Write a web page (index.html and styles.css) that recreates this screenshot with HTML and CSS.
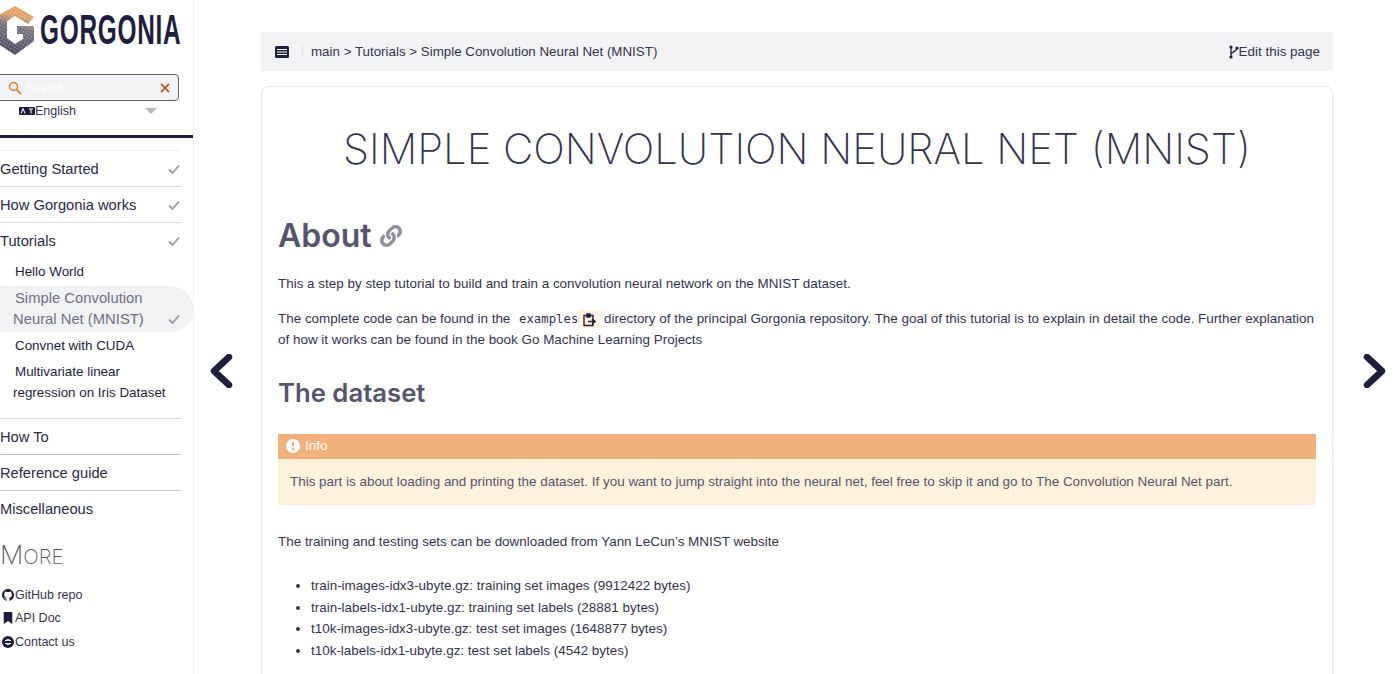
FILE: index.html
```html
<!DOCTYPE html>
<html lang="en">
<head>
<meta charset="utf-8">
<title>Simple Convolution Neural Net (MNIST)</title>
<link rel="stylesheet" href="styles.css">
</head>
<body>
<div class="page">
  <aside class="sidebar">
    <a class="logo">
      <svg class="logo-mark" viewBox="0 0 36 60" width="36" height="60">
        <defs>
          <linearGradient id="lg" x1="0.6" y1="0" x2="0.4" y2="1">
            <stop offset="0" stop-color="#eda75c"/>
            <stop offset="0.22" stop-color="#d99f6c"/>
            <stop offset="0.42" stop-color="#77737f"/>
            <stop offset="1" stop-color="#47465e"/>
          </linearGradient>
          <pattern id="dots" width="3" height="3" patternUnits="userSpaceOnUse" patternTransform="rotate(30)">
            <rect width="1.1" height="1.1" fill="#fff" fill-opacity="0.55"/>
          </pattern>
        </defs>
        <path id="g" d="M-3 16 L15 6 L34 17 L28 24 L15 16 L7 21 L7 38 L15 44 L23 39 L23 34 L17 34 L17 26 L34 26 L34 41 L15 55 L-3 43 Z" fill="url(#lg)"/>
        <path d="M-3 16 L15 6 L34 17 L28 24 L15 16 L7 21 L7 38 L15 44 L23 39 L23 34 L17 34 L17 26 L34 26 L34 41 L15 55 L-3 43 Z" fill="url(#dots)"/>
      </svg>
      <span class="logo-text">GORGONIA</span>
    </a>
    <div class="search">
      <svg class="search-icon" viewBox="0 0 14 14" width="14" height="14"><circle cx="5.5" cy="5.5" r="4" fill="none" stroke="#d9822b" stroke-width="1.5"/><path d="M8.6 8.6 L13 13" stroke="#d9822b" stroke-width="1.8"/></svg>
      <span class="search-ph">Search...</span>
      <svg class="search-x" viewBox="0 0 10 10" width="10" height="10"><path d="M1 1 L9 9 M9 1 L1 9" stroke="#b5652a" stroke-width="1.8"/></svg>
    </div>
    <div class="lang">
      <svg class="lang-icon" viewBox="0 0 16 8" width="16" height="8"><rect width="16" height="8" rx="1" fill="#1e1e3f"/><path d="M2 6.5 L4 1.5 L6 6.5 M10 2 H14 M12 2 V6.5" fill="none" stroke="#fff" stroke-width="1"/></svg>
      <span>English</span>
      <span class="lang-caret"></span>
    </div>
    <div class="rule"></div>
    <ul class="menu">
      <li class="menu-item dotted"><span>Getting Started</span><svg class="check" viewBox="0 0 12 10" width="12" height="10"><path d="M1 5.5 L4.5 9 L11 1.5" fill="none" stroke="#9a9aa6" stroke-width="1.8"/></svg></li>
      <li class="menu-item dotted"><span>How Gorgonia works</span><svg class="check" viewBox="0 0 12 10" width="12" height="10"><path d="M1 5.5 L4.5 9 L11 1.5" fill="none" stroke="#9a9aa6" stroke-width="1.8"/></svg></li>
      <li class="menu-item"><span>Tutorials</span><svg class="check" viewBox="0 0 12 10" width="12" height="10"><path d="M1 5.5 L4.5 9 L11 1.5" fill="none" stroke="#9a9aa6" stroke-width="1.8"/></svg></li>
      <li class="submenu">
        <a class="sub hello">Hello World</a>
        <a class="sub active"><span class="sub-text"><span class="indent">Simple Convolution</span><br>Neural Net (MNIST)</span><svg class="check" viewBox="0 0 12 10" width="12" height="10"><path d="M1 5.5 L4.5 9 L11 1.5" fill="none" stroke="#9a9aa6" stroke-width="1.8"/></svg></a>
        <a class="sub convnet">Convnet with CUDA</a>
        <a class="sub multi"><span class="indent">Multivariate linear</span><br>regression on Iris Dataset</a>
      </li>
      <li class="menu-item solid"><span>How To</span></li>
      <li class="menu-item solid"><span>Reference guide</span></li>
      <li class="menu-item"><span>Miscellaneous</span></li>
    </ul>
    <h3 class="more">More</h3>
    <ul class="links">
      <li><svg viewBox="0 0 16 16" width="12" height="12"><path fill="#1e1e3f" d="M8 0C3.58 0 0 3.58 0 8c0 3.54 2.29 6.53 5.47 7.59.4.07.55-.17.55-.38 0-.19-.01-.82-.01-1.49-2.01.37-2.53-.49-2.69-.94-.09-.23-.48-.94-.82-1.13-.28-.15-.68-.52-.01-.53.63-.01 1.08.58 1.23.82.72 1.21 1.87.87 2.33.66.07-.52.28-.87.51-1.07-1.78-.2-3.64-.89-3.64-3.95 0-.87.31-1.59.82-2.15-.08-.2-.36-1.02.08-2.12 0 0 .67-.21 2.2.82.64-.18 1.32-.27 2-.27.68 0 1.36.09 2 .27 1.53-1.04 2.2-.82 2.2-.82.44 1.1.16 1.92.08 2.12.51.56.82 1.27.82 2.15 0 3.07-1.87 3.75-3.65 3.95.29.25.54.73.54 1.48 0 1.07-.01 1.93-.01 2.2 0 .21.15.46.55.38A8.013 8.013 0 0016 8c0-4.42-3.58-8-8-8z"/></svg>GitHub repo</li>
      <li><svg viewBox="0 0 12 14" width="12" height="12"><path fill="#1e1e3f" d="M1 0 H11 V14 L6 10.5 L1 14 Z"/></svg>API Doc</li>
      <li><svg viewBox="0 0 16 16" width="12" height="12"><circle cx="8" cy="8" r="8" fill="#1e1e3f"/><path d="M4 6 H7 V4 M12 6 H9 V4 M4 10 H7 V12 M12 10 H9 V12" fill="none" stroke="#fff" stroke-width="1.5"/></svg>Contact us</li>
    </ul>
  </aside>

  <div class="nav-col">
    <svg viewBox="0 0 24 34" width="24" height="34"><path d="M20 3 L5 17 L20 31" fill="none" stroke="#1e1e3f" stroke-width="6.5" stroke-linecap="round" stroke-linejoin="round"/></svg>
  </div>

  <main class="main">
    <div class="topbar">
      <svg class="topbar-icon" viewBox="0 0 14 12" width="14" height="12"><rect width="14" height="12" rx="1.5" fill="#1e1e3f"/><path d="M2 3.5 H12 M2 6 H12 M2 8.5 H12" stroke="#fff" stroke-width="1"/></svg>
      <span class="crumb-sep"></span>
      <span class="crumbs">main &gt; Tutorials &gt; Simple Convolution Neural Net (MNIST)</span>
      <span class="edit"><svg viewBox="0 0 10 14" width="10" height="14"><circle cx="2" cy="2" r="1.6" fill="#1e1e3f"/><circle cx="2" cy="12" r="1.6" fill="#1e1e3f"/><circle cx="8" cy="3" r="1.6" fill="#1e1e3f"/><path d="M2 2 V12 M8 3 C8 7 3 6 2 9" fill="none" stroke="#1e1e3f" stroke-width="1.3"/></svg>Edit this page</span>
    </div>
    <article class="card">
      <h1 class="title">Simple Convolution Neural Net (MNIST)</h1>
      <h2 class="h-about">About <svg class="link-icon" viewBox="0 0 512 512" width="22" height="22"><path fill="#8f8f9d" d="M326.6 185.4c59.7 59.8 58.9 155.7.4 214.6l-67.2 67.2c-59.3 59.3-155.7 59.3-215 0-59.3-59.3-59.3-155.7 0-215l37.1-37.1c9.8-9.8 26.8-3.3 27.3 10.6.6 17.7 3.8 35.5 9.7 52.7 2 5.8.6 12.3-3.8 16.6l-13.1 13.1c-28 28-28.9 73.7-1.2 102 28 28.6 74.1 28.7 102.3.5l67.2-67.2c28.2-28.2 28.1-73.8 0-101.8-3.7-3.7-7.4-6.6-10.3-8.6-5.1-3.5-8.2-9.2-8.4-15.3-.4-10.6 3.4-21.5 11.7-29.8l21.1-21.1c5.5-5.5 14.2-6.2 20.6-1.7 7.4 5.2 14.3 11 20.7 17.3zM467.5 44.4c-59.3-59.3-155.7-59.3-215 0l-67.2 67.2c-.1.1-.2.2-.3.3-58.5 58.9-59.3 154.8.4 214.6 6.4 6.4 13.3 12.2 20.7 17.3 6.4 4.5 15.1 3.8 20.6-1.7l21.1-21.1c8.3-8.3 12.1-19.2 11.7-29.8-.2-6.1-3.3-11.8-8.4-15.3-2.9-2-6.6-4.9-10.3-8.6-28.1-28-28.2-73.6 0-101.8l67.2-67.2c28.2-28.2 74.3-28.1 102.3.5 27.7 28.3 26.8 74-1.2 102l-13.1 13.1c-4.4 4.3-5.8 10.8-3.8 16.6 5.9 17.2 9.1 35 9.7 52.7.5 13.9 17.5 20.4 27.3 10.6l37.1-37.1c59.3-59.3 59.3-155.7 0-215z"/></svg></h2>
      <p class="p1">This a step by step tutorial to build and train a convolution neural network on the MNIST dataset.</p>
      <p class="p2">The complete code can be found in the <code class="code">examples</code><span class="clip"><svg viewBox="0 0 14 14" width="14" height="14"><path d="M2 2.5 H11 V12.5 H2 Z M5 1 H8 V4 H5 Z" fill="none" stroke="#1e1e3f" stroke-width="1.4"/><path d="M6 8.5 H13 M10 6 L13 8.5 L10 11" fill="none" stroke="#1e1e3f" stroke-width="1.5"/></svg></span> directory of the principal Gorgonia repository. The goal of this tutorial is to explain in detail the code. Further explanation of how it works can be found in the book Go Machine Learning Projects</p>
      <h2 class="h-data">The dataset</h2>
      <div class="notice">
        <div class="notice-head"><svg viewBox="0 0 14 14" width="14" height="14"><circle cx="7" cy="7" r="7" fill="#fff"/><rect x="6" y="3" width="2" height="5" fill="#f0b27a"/><rect x="6" y="9" width="2" height="2" fill="#f0b27a"/></svg><span>Info</span></div>
        <div class="notice-body">This part is about loading and printing the dataset. If you want to jump straight into the neural net, feel free to skip it and go to The Convolution Neural Net part.</div>
      </div>
      <p class="p3">The training and testing sets can be downloaded from Yann LeCun’s MNIST website</p>
      <ul class="files">
        <li>train-images-idx3-ubyte.gz: training set images (9912422 bytes)</li>
        <li>train-labels-idx1-ubyte.gz: training set labels (28881 bytes)</li>
        <li>t10k-images-idx3-ubyte.gz: test set images (1648877 bytes)</li>
        <li>t10k-labels-idx1-ubyte.gz: test set labels (4542 bytes)</li>
      </ul>
    </article>
  </main>

  <div class="nav-col nav-next">
    <svg viewBox="0 0 24 34" width="24" height="34"><path d="M4 3 L19 17 L4 31" fill="none" stroke="#1e1e3f" stroke-width="6.5" stroke-linecap="round" stroke-linejoin="round"/></svg>
  </div>
</div>
</body>
</html>
```
FILE: styles.css
```css
* { box-sizing: border-box; }
html, body { margin: 0; padding: 0; background: #fff; }
body {
  font-family: "Liberation Sans", Arial, sans-serif;
  font-size: 13.45px;
  color: #33334f;
  width: 1400px;
  height: 674px;
  overflow: hidden;
}
.page { display: flex; height: 674px; overflow: hidden; }
ul { list-style: none; margin: 0; padding: 0; }

.sidebar { width: 194px; flex: none; border-right: 1px solid #f0f0f2; height: 674px; overflow: hidden; }
.logo { display: flex; align-items: flex-start; height: 74px; }
.logo-mark { flex: none; }
.logo-text {
  display: inline-block;
  font: bold 42px/1 "Liberation Sans", sans-serif;
  color: #1e1e3f;
  transform: scaleX(0.58);
  transform-origin: left top;
  margin: 9px 0 0 4px;
  letter-spacing: 1.3px;
  white-space: nowrap;
}
.search {
  display: flex; align-items: center;
  width: 184px; height: 27px; margin-left: -5px;
  background: #f1f2f4; border: 1px solid #62607a; border-radius: 4px;
  padding: 0 8px 0 12px;
}
.search-ph { color: #fff; font-size: 12px; margin-left: 4px; flex: 1; }
.lang { display: flex; align-items: center; height: 20px; padding-left: 19px; font-size: 12.5px; padding-right: 36px; }
.lang-icon { flex: none; }
.lang span:nth-child(2) { flex: 1; }
.lang-caret { width: 0; height: 0; border: 6px solid transparent; border-top: 6px solid #b8b8c2; border-bottom: 0; }
.rule { height: 3px; background: #1e1e3f; margin-top: 14px; }

.menu { margin-top: 12px; border-top: 1px solid #f0f0f2; margin-right: 12px; }
.menu-item { display: flex; justify-content: space-between; align-items: center; height: 36px; font-size: 14.7px; color: #2a2a48; }
.menu-item.dotted { border-bottom: 1px dotted #c4c4cc; }
.menu-item.solid { border-bottom: 1px solid #c4c4cc; }
.check { flex: none; margin-right: 1px; }
.submenu { display: block; padding-bottom: 15px; border-bottom: 1px dotted #c4c4cc; }
.sub { display: block; font-size: 13.4px; line-height: 21px; padding-left: 13px; color: #1e1e3f; }
.indent { padding-left: 2px; }
.hello { padding-left: 15px; margin: 2px 0 4px; }
.active {
  display: flex; align-items: flex-end; justify-content: space-between;
  margin-right: -12px; padding: 2px 12px 2px 13px;
  background: #f1f2f4; border-radius: 0 22px 22px 0;
  color: #6f6f82; font-size: 14.8px; height: 46px;
}
.active .check { margin-bottom: 6px; }
.convnet { padding-left: 15px; margin-top: 3px; }
.multi { margin-top: 5px; }

.more { margin: 13px 0 0; font: 200 20.5px/30px Inter, sans-serif; text-transform: uppercase; color: #55556e; height: 30px; }
.more::first-letter { font-size: 26px; }
.links { margin-top: 13px; font-size: 12.5px; }
.links li { display: flex; align-items: center; gap: 1px; height: 23.5px; padding-left: 2px; }

.nav-col { width: 67px; flex: none; padding: 354px 0 0 15px; }
.nav-next { width: auto; flex: 1; padding-left: 30px; }

.main { width: 1072px; flex: none; padding-top: 32px; }
.topbar { display: flex; align-items: center; height: 39px; background: #f2f3f5; padding: 0 13px 0 14px; }
.topbar-icon { flex: none; margin-right: 13px; }
.crumb-sep { width: 1px; height: 15px; background: #e4e4e8; margin-right: 8px; flex: none; }
.crumbs { flex: 1; font-size: 13.35px; }
.edit { display: flex; align-items: center; }
.card { margin-top: 15px; border: 1px solid #e8e8ec; border-radius: 8px; padding: 0 16px; height: 700px; }
.title { margin: 34px 0 0; text-align: center; font: 200 41.8px/56px Inter, sans-serif; text-transform: uppercase; color: #33334f; }
.h-about { margin: 37px 0 0; font: 600 32px/44px Inter, sans-serif; color: #55556e; display: flex; align-items: center; gap: 8px; }
.p1 { margin: 15px 0 0; line-height: 21px; }
.p2 { margin: 14px 0 0; line-height: 21px; }
.code { font: 12.3px "DejaVu Sans Mono", monospace; margin-left: 5px; }
.clip { display: inline-block; background: #fff2dc; padding: 2px 4px 0; height: 18px; width: 22px; vertical-align: -4px; }
.h-data { margin: 25px 0 0; font: 600 25.7px/36px Inter, sans-serif; color: #55556e; }
.notice { margin-top: 23px; }
.notice-head { display: flex; align-items: center; gap: 5px; height: 25px; background: #f0b27a; color: #fff; padding: 0 0 2px 8px; }
.notice-body { height: 46px; line-height: 46px; background: #fff2dc; padding-left: 12px; color: #55556e; }
.p3 { margin: 26px 0 0; line-height: 21px; }
.files { margin-top: 23px; padding-left: 33px; list-style: disc; }
.files li { line-height: 21.5px; }
```
